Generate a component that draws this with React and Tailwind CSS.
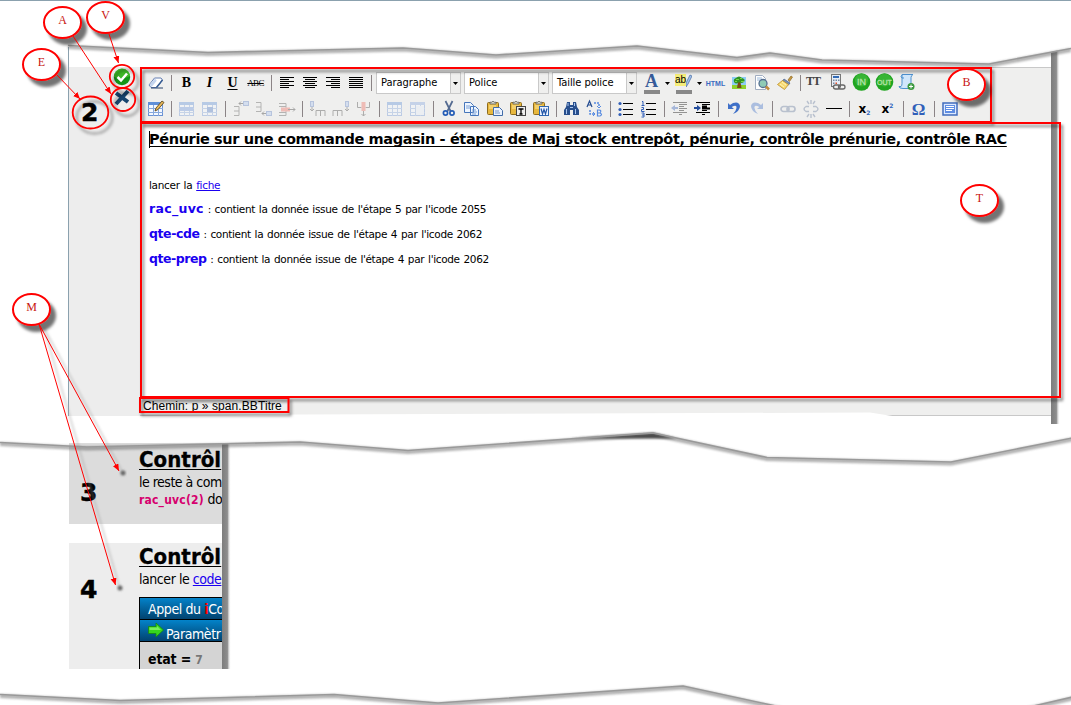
import React from "react";

const Box = ({ children, dim, className = "" }) => (
  <span className={`flex h-[22px] w-[23px] shrink-0 items-center justify-center ${className}`}>
    <svg width="20" height="20" viewBox="0 0 20 20" opacity={dim ? 0.38 : 1} fill="none">{children}</svg>
  </span>
);

const Sep = () => (
  <span className="flex h-[22px] w-[8px] shrink-0 items-center justify-center">
    <span className="h-[16px] w-px bg-[#8b8486]" />
  </span>
);

const Lines = ({ rows, color = "#000" }) => (
  <g fill={color} shapeRendering="crispEdges">
    {rows.map(([x, y, w], i) => <rect key={i} x={x} y={y} width={w} height="1" />)}
  </g>
);

const Glyph = ({ children, className }) => (
  <span className={`flex h-[22px] w-[23px] shrink-0 items-center justify-center leading-none text-black ${className}`}>{children}</span>
);

const Select = ({ label }) => (
  <span className="mr-[3px] flex h-[22px] w-[85px] shrink-0 border border-[#c9c9c9] bg-white">
    <span className="flex-1 pl-[4px] font-['DejaVu_Sans_Condensed','DejaVu_Sans',sans-serif] text-[11px] leading-[20px] tracking-[-0.05px] text-black">{label}</span>
    <span className="flex w-[10px] items-center justify-center border-l border-[#c9c9c9] bg-[#efefee]"><Caret /></span>
  </span>
);

const Caret = () => <svg width="5" height="3" viewBox="0 0 5 3"><path d="M0 0h5L2.5 3z" fill="#000" /></svg>;

const Table = ({ x = 2, y = 3, w = 15, h = 14, head = "#5f8fd8" }) => (
  <g>
    <rect x={x + 0.5} y={y + 0.5} width={w - 1} height={h - 1} fill="#f4f8ff" stroke="#6a92d4" />
    <rect x={x} y={y} width={w} height="3" fill={head} />
    <path d={`M${x} ${y + 6.5}h${w}M${x} ${y + 10.5}h${w}M${x + 5.5} ${y + 3}v${h - 3}M${x + 10.5} ${y + 3}v${h - 3}`} stroke="#86a8dd" />
  </g>
);

const Clipboard = ({ children }) => (
  <g>
    <rect x="2.5" y="3.5" width="11" height="12" rx="1" fill="#e8b83e" stroke="#8d6b1d" />
    <path d="M5 5V3.2h1.7Q8 1 9.3 3.2H11V5z" fill="#d6d6c6" stroke="#666" strokeWidth=".8" />
    <path d="M4 7h7M4 9h4" stroke="#ffe89a" />
    {children}
  </g>
);

const Toolbar = () => (
  <div className="flex h-[55px] flex-col border-t border-[#c8c8c8] bg-[#efefee] pt-[4px] pl-[4px]">
    <div className="flex h-[26px]">
      <Box><path d="M3 12 8.500 5h6.500l1.500 2-6 7.500H5z" fill="#fff" stroke="#657fb2" strokeLinejoin="round" /><path d="M3.500 11.800 9 5.500l1.800 2.300-5.300 6.200z" fill="#c3d4ee" /><path d="M5 15h12" stroke="#29446e" /><path d="m16.500 7-6 7.500" stroke="#355a91" strokeWidth="1.500" /></Box>
      <Sep />
      <Glyph className="font-['Liberation_Serif',serif] text-[14px] font-bold">B</Glyph>
      <Glyph className="font-['Liberation_Serif',serif] text-[14px] font-bold italic">I</Glyph>
      <Glyph className="font-['Liberation_Serif',serif] text-[14px] font-bold underline underline-offset-2">U</Glyph>
      <Glyph className="font-['Liberation_Serif',serif] text-[9px] tracking-[-0.7px] line-through">ABC</Glyph>
      <Sep />
      <Box><Lines rows={[[3,4,14],[3,6,9],[3,8,14],[3,10,9],[3,12,14],[3,14,9]]} /></Box>
      <Box><Lines rows={[[3,4,14],[5,6,10],[3,8,14],[5,10,10],[3,12,14],[5,14,10]]} /></Box>
      <Box><Lines rows={[[3,4,14],[8,6,9],[3,8,14],[8,10,9],[3,12,14],[8,14,9]]} /></Box>
      <Box><Lines rows={[[3,4,14],[3,6,14],[3,8,14],[3,10,14],[3,12,14],[3,14,14]]} /></Box>
      <Sep />
      <span className="ml-px flex">
        <Select label="Paragraphe" />
        <Select label="Police" />
        <Select label="Taille police" />
      </span>
      <span className="flex w-[32px]">
        <span className="flex w-[23px] flex-col items-center">
          <span className="font-['Liberation_Serif',serif] text-[18px] leading-[18px] font-bold text-[#365b99]">A</span>
          <span className="h-[4px] w-[16px] bg-[#888]" />
        </span>
        <span className="flex h-[22px] w-[9px] items-center justify-center"><Caret /></span>
      </span>
      <span className="flex w-[32px]">
        <span className="flex w-[23px] flex-col items-center">
          <span className="flex h-[18px] items-start pt-[2px]">
            <span className="h-[12px] bg-[#f6ed77] font-['Liberation_Sans',sans-serif] text-[10px] leading-[11px] text-black">ab</span>
            <svg width="6" height="14" viewBox="0 0 6 14"><path d="M0 13V9l4-8 2 1-4 8z" fill="#9fc1ef" stroke="#486a9e" strokeWidth=".7" /></svg>
          </span>
          <span className="h-[4px] w-[16px] bg-[#888]" />
        </span>
        <span className="flex h-[22px] w-[9px] items-center justify-center"><Caret /></span>
      </span>
      <Glyph className="font-['Liberation_Sans',sans-serif] text-[7px] font-bold"><span className="text-[#3a6bc0]">HTML</span></Glyph>
      <Box><rect x="3" y="4" width="14" height="12" fill="#8ecbf5" /><path d="M3 12h14v4H3z" fill="#8ed02c" /><path d="M9 9h2.500l1 6H8z" fill="#7a4b16" /><path d="M5 9q-1-3 2-4 3-3 6 0 4 1 2 4-3 2-5 0-3 3-5 0z" fill="#2f9422" /><path d="M7 6.500h3M11 5.500h2M12 8.500h3M6 8.500h2" stroke="#77d545" /></Box>
      <Box><path d="M3.500 2.500h7l3 3v11h-10z" fill="#fff" stroke="#a0adc0" /><path d="M5 5h5M5 7h5" stroke="#9bb9da" /><circle cx="11" cy="10.500" r="4" fill="#8fcbb5" stroke="#566f91" strokeWidth="1.300" /><path d="m14 13.500 3 3" stroke="#c18b39" strokeWidth="2.500" /></Box>
      <Box><path d="m13 7 3-4 1.500 1-3 4.500z" fill="#ca9a40" stroke="#8c6b28" strokeWidth=".7" /><path d="m9 6 6 4-1.500 2-6-4z" fill="#778fb6" stroke="#4b628c" strokeWidth=".7" /><path d="m7.500 7.500 6 4-4 5-7-5z" fill="#f8da73" stroke="#b98c26" strokeWidth=".8" /><path d="m5 11 4 3M7 9l4 3" stroke="#fff3b7" /></Box>
      <Sep />
      <Glyph className="pr-[5px] pb-[4px] font-['Liberation_Serif',serif] text-[12px] font-bold tracking-[-1px]"><span className="text-[#444]">TT</span></Glyph>
      <Box><rect x="2.500" y="1.500" width="9" height="12" fill="#e6edf7" stroke="#777" /><rect x="4" y="3" width="6" height="2" fill="#336bb6" /><g fill="#798aa0"><path d="M4 6.500h1.500V8H4zM6.500 6.500H8V8H6.500zM9 6.500h1.500V8H9zM4 9.500h1.500V11H4z" /><path d="M6.500 9.500H8V11H6.500z" fill="#e5532e" /></g><rect x="4.500" y="12" width="6.500" height="4" rx="2" stroke="#666" strokeWidth="1.300" fill="#eee" /><rect x="9.500" y="12" width="6.500" height="4" rx="2" stroke="#666" strokeWidth="1.300" /></Box>
      {["IN", "OUT"].map((t) => (
        <Glyph key={t}><svg width="20" height="20" viewBox="0 0 20 20"><circle cx="9.500" cy="9" r="8.800" fill="#20a520" /><circle cx="9.500" cy="7" r="6.500" fill="#48bf43" opacity=".6" /><text x="9.500" y={t === "IN" ? 12 : 11.5} textAnchor="middle" fontFamily="Liberation Sans" fontSize={t === "IN" ? 9 : 7} fill="#b5e3a8" stroke="#b5e3a8" strokeWidth=".3">{t}</text></svg></Glyph>
      ))}
      <Box><path d="M4 1.500h11q-2 1-2 3v11H5q-4 0-4-2h2q1-1 1-3z" fill="#cfe6fb" stroke="#4c91cf" /><path d="M4 2q-2 2 0 3h2" stroke="#4c91cf" /><circle cx="13" cy="13.500" r="3.500" fill="#3b993f" /><path d="M11 13.500h4M13 11.500v4" stroke="#fff" /></Box>
    </div>
    <div className="flex h-[22px]">
      <Box><Table /><path d="m9 12 1-3 6-7 2 1.500-6 7z" fill="#e9b959" stroke="#5d4a20" strokeWidth=".9" /></Box>
      <Sep />
      <Box dim><Table /><rect x="3" y="8" width="13" height="4" fill="#6b95dd" /></Box>
      <Box dim><Table /><rect x="7" y="8" width="6" height="5" fill="#4b78c5" /></Box>
      <Sep />
      <Box dim><path d="M3 7.500h5v9H3M3 12h5" stroke="#555" /><path d="M8 4.500h4M10 2.500l-2 2 2 2" stroke="#333" /><rect x="12.500" y="2.500" width="5" height="4" fill="#a9c3ef" stroke="#5f7fc4" /></Box>
      <Box dim><path d="M2 3.500h5v9H2M2 8h5" stroke="#555" /><path d="M8 14.500h4M10 12.500l-2 2 2 2" stroke="#333" /><rect x="12.500" y="12.500" width="5" height="4" fill="#a9c3ef" stroke="#5f7fc4" /></Box>
      <Box dim><path d="M2 4.500h7v12H2M2 7.500h7M2 13.500h7" stroke="#555" /><rect x="4" y="8.500" width="9" height="4" fill="#ed6a5e" /><path d="M11 10.500h7m-2-2 2 2-2 2" stroke="#333" /></Box>
      <Sep />
      <Box dim><rect x="2.500" y="2.500" width="3" height="5" fill="#a9c3ef" stroke="#5f7fc4" /><path d="M4 8v4m-2-2 2 2 2-2M8 17v-5.500h9V17M12.500 12v5" stroke="#444" /></Box>
      <Box dim><rect x="14.500" y="2.500" width="3" height="5" fill="#a9c3ef" stroke="#5f7fc4" /><path d="M16 8v4m-2-2 2 2 2-2M2 17v-5.500h9V17M6.500 12v5" stroke="#444" /></Box>
      <Box dim><path d="M3.500 3v5.500h4M15.500 3v5.500h-4M9.500 11v6m-2-2 2 2 2-2" stroke="#444" /><rect x="7.500" y="3" width="4" height="9" fill="#ed6a5e" /></Box>
      <Sep />
      <Box dim><Table /></Box>
      <Box dim><Table head="#82a5df" /><rect x="8" y="7" width="8" height="9" fill="#e5edfb" /></Box>
      <Sep />
      <Box><path d="m6.500 2 5 10M13.500 2l-5 10" stroke="#536a91" strokeWidth="1.700" /><circle cx="6.500" cy="14" r="2.100" stroke="#245cb6" strokeWidth="1.700" /><circle cx="13" cy="14" r="2.100" stroke="#245cb6" strokeWidth="1.700" /></Box>
      <Box><path d="M2.500 3.500h6l3 3v7h-9zM8.500 7.500h5l3 3v6h-8z" fill="#edf5ff" stroke="#4575bb" /><path d="M4 7h4M4 9h4M10 11h4M10 13h5M10 15h4" stroke="#7b9fd4" /></Box>
      <Box><Clipboard><path d="M8.500 8.500h6l3 3v5h-9z" fill="#eaf2ff" stroke="#416ca9" /><path d="M10 12h4M10 14h5" stroke="#7897c7" /></Clipboard></Box>
      <Box><Clipboard><rect x="8.500" y="7.500" width="9" height="9" fill="#eee" stroke="#444" /><path d="M10.500 10h5M13 10v5M11.500 15h3" stroke="#000" strokeWidth="1.300" /></Clipboard></Box>
      <Box><Clipboard><rect x="8.500" y="7.500" width="9" height="9" fill="#edf4ff" stroke="#3168b2" /><path d="m10 9.500 1.500 5.500L13 10.500l1.500 4.500L16 9.500" stroke="#2256a8" strokeWidth="1.200" /></Clipboard></Box>
      <Sep />
      <Box><path d="M5 3h3v3h3V3h3l1 5 2 3v5h-6v-5H8v5H2v-5l2-3z" fill="#284f8d" /><path d="M4.500 10v5M13.500 10v5M6 4v3M12.500 4v3M8 8.500h3" stroke="#a9c6ef" /></Box>
      <Box><path d="M2 8 4.500 2 7 8M3 6h3" stroke="#244c91" strokeWidth="1.200" /><path d="M12.500 11v6h2.500q3-1.500 0-3 2-3-1-3zm0 3h3" stroke="#578be0" strokeWidth="1.200" /><path d="M9 4h5v4M5 11v4h5" stroke="#578be0" strokeWidth="1.500" strokeDasharray="2 1" /><path d="m12 7 2 2 2-2M8 13l2 2-2 2" stroke="#578be0" /></Box>
      <Sep />
      <Box><Lines rows={[[7,4,10],[7,10,10],[7,15,10]]} /><g fill="#315eb8"><circle cx="4" cy="4.500" r="1.600" /><circle cx="4" cy="10.500" r="1.600" /><circle cx="4" cy="15.500" r="1.600" /></g></Box>
      <Box><Lines rows={[[7,4,10],[7,10,10],[7,15,10]]} /><path d="M3 2.500h1v4M2.500 6.500h3M2.500 8.500h2v2h-2v2h3M2.500 14h2.500v4H2.500M3 16h2" stroke="#315eb8" /></Box>
      <Sep />
      <Box dim><Lines rows={[[3,3,14],[9,5,8],[9,7,5],[9,9,8],[9,11,5],[3,13,14],[9,15,3]]} /><path d="m1 9 4-3v2h3v2H5v2z" fill="#315eb8" /></Box>
      <Box><Lines rows={[[3,3,14],[9,5,8],[9,7,5],[9,9,8],[9,11,5],[3,13,14],[9,15,3]]} /><path d="M9 7.500h5M9 9.500h8" stroke="#000" strokeWidth="2" /><path d="M8 9 4 6v2H1v2h3v2z" fill="#234d9c" /></Box>
      <Sep />
      <Box><path d="M4 4v6h6L7.700 8Q13 5 12.500 9q-.4 3-3.500 6 7-3 7-8-1-5-7-3L6 6z" fill="#3f70c8" /></Box>
      <Box dim><path d="M16 4v6h-6l2.300-2Q7 5 7.500 9q.4 3 3.500 6-7-3-7-8 1-5 7-3l3 2z" fill="#3f70c8" /></Box>
      <Sep />
      <Box dim><rect x="3" y="7.500" width="8" height="5" rx="2.500" stroke="#62779b" strokeWidth="1.700" /><rect x="9" y="7.500" width="8" height="5" rx="2.500" stroke="#62779b" strokeWidth="1.700" /></Box>
      <Box dim><path d="M8 7.500H5q-4 2.500 0 5h3M12 7.500h3q4 2.500 0 5h-3M10 1v4M10 15v4M6 2l2 3M14 2l-2 3M6 18l2-3M14 18l-2-3" stroke="#62779b" strokeWidth="1.400" /></Box>
      <Box><Lines rows={[[2,9,16]]} /></Box>
      <Sep />
      <Glyph className="font-['DejaVu_Sans',sans-serif] text-[12px] font-bold"><span>x</span><span className="pt-[7px] text-[6px] text-[#3165bd]">2</span></Glyph>
      <Glyph className="font-['DejaVu_Sans',sans-serif] text-[12px] font-bold"><span>x</span><span className="pb-[6px] text-[6px] text-[#3165bd]">2</span></Glyph>
      <Sep />
      <Glyph className="font-['Liberation_Serif',serif] text-[17px] font-bold"><span className="text-[#315fb9]">Ω</span></Glyph>
      <Sep />
      <Box><rect x="3" y="4" width="14" height="12" fill="#dce9ff" stroke="#426dbd" strokeWidth="1.500" /><rect x="5" y="6" width="10" height="8" fill="#5f8ee3" /><Lines color="#fff" rows={[[6,7,8],[6,9,8],[6,11,6]]} /></Box>
    </div>
  </div>
);

const Entry = ({ name, nameClass, children }) => (
  <p className="h-[25px] whitespace-nowrap text-[10.5px] leading-[25px] tracking-[-0.34px] [word-spacing:0.8px]">
    <b className={`text-[12.5px] ${nameClass} text-[#1a00f0]`}>{name}</b>{children}
  </p>
);

const StepNumber = ({ children, className }) => (
  <span className={`block font-['DejaVu_Sans',sans-serif] text-[25px] leading-[25px] font-bold tracking-normal text-black [-webkit-text-stroke:0.5px_black] ${className}`}>{children}</span>
);

const Editor = () => (
  <section className="flex h-[369px] w-[983px] border-l border-[#8ba1ae]">
    <aside className="mt-[20px] flex w-[71px] shrink-0 flex-col bg-[#ededed]">
      <StepNumber className="pt-[33px] pl-[12px]">2</StepNumber>
    </aside>
    <div className="mt-[20px] flex flex-1 flex-col">
      <Toolbar />
      <div className="flex h-[275px] flex-col bg-white pt-[7px] pl-[9px] font-['DejaVu_Sans',sans-serif] text-black">
        <h1 className="h-[20px] text-[14.5px] leading-[20px] font-bold tracking-[-0.375px] whitespace-nowrap underline decoration-1 underline-offset-2 [text-decoration-skip-ink:none]"><span className="-mr-px inline-block h-[17px] w-px bg-black align-[-4px]" />Pénurie sur une commande magasin - étapes de Maj stock entrepôt, pénurie, contrôle prénurie, contrôle RAC</h1>
        <p className="mt-[24px] h-[25px] text-[10.5px] leading-[25px] tracking-[-0.3px] whitespace-nowrap [word-spacing:0.8px]">lancer la <span className="text-[#1a00f0] underline">fiche</span></p>
        <div className="-mt-[2px]">
          <Entry name="rac_uvc" nameClass="tracking-[0.3px]"> : contient la donnée issue de l'étape 5 par l'icode 2055</Entry>
          <Entry name="qte-cde" nameClass="tracking-[-0.4px]"> : contient la donnée issue de l'étape 4 par l'icode 2062</Entry>
          <Entry name="qte-prep" nameClass="tracking-[-0.45px]"> : contient la donnée issue de l'étape 4 par l'icode 2062</Entry>
        </div>
      </div>
      <div className="flex-1 border-b border-[#c8c8c8] bg-[#efefee] pl-[3px] font-['Liberation_Sans',sans-serif] text-[12px] leading-[18px] tracking-[0.08px] text-black">Chemin: p » span.BBTitre</div>
    </div>
  </section>
);

const StepTitle = ({ children, className }) => (
  <h2 className={`h-[26px] text-[22px] leading-[26px] font-bold tracking-[0.05px] underline decoration-1 underline-offset-2 [-webkit-text-stroke:0.3px_black] ${className}`}>{children}</h2>
);

const Steps = () => (
  <section className="ml-[69px] flex h-[226px] w-[153px] flex-col overflow-hidden font-['DejaVu_Sans_Condensed','DejaVu_Sans',sans-serif] text-[14px] tracking-[-0.4px] whitespace-nowrap text-black">
    <div className="flex h-[81px] bg-[#dcdcdc]">
      <div className="w-[70px] shrink-0"><StepNumber className="pt-[37px] pl-[11px]">3</StepNumber></div>
      <div className="w-[83px] shrink-0">
        <StepTitle className="mt-[4px]">Contrôl</StepTitle>
        <p className="h-[17px] leading-[18px] tracking-[-0.5px]">le reste à com</p>
        <p className="h-[17px] leading-[18px]"><b className="text-[12px] tracking-[0.2px] text-[#d6006e]">rac_uvc(2)</b> do</p>
      </div>
    </div>
    <div className="mt-[19px] flex h-[126px] bg-[#ededed]">
      <div className="w-[70px] shrink-0"><StepNumber className="pt-[34px] pl-[11px]">4</StepNumber></div>
      <div className="w-[83px] shrink-0">
        <StepTitle className="mt-px">Contrôl</StepTitle>
        <p className="h-[17px] leading-[18px] tracking-[-0.45px]">lancer le <span className="text-[#1a00f0] underline">code</span></p>
        <div className="mt-[10px] border border-r-0 border-black bg-[#d4d4d4] text-white">
          <div className="h-[22px] border-b border-black bg-linear-to-b from-[#0383ca] to-[#024370] pl-[8px] leading-[22px] tracking-[-0.4px]">Appel du <b className="text-[#ff0000]">i</b>Co</div>
          <div className="flex h-[22px] border-b border-black bg-linear-to-b from-[#0383ca] to-[#024370] pl-[8px] leading-[28px]">
            <svg className="mt-[2px] mr-[2px] shrink-0" width="16" height="16" viewBox="0 0 16 16"><path d="M.5 4.500h7.500V1l7.500 7-7.500 7v-3.500H.5z" fill="#36d51e" stroke="#16870e" strokeWidth=".8" /><path d="M1.500 5.500H9V4l4 4H1.500z" fill="#79ef5d" /></svg>Paramètr
          </div>
          <div className="h-[30px] pl-[8px] leading-[34px] font-bold tracking-[-0.15px] text-black">etat = <span className="text-[12px] text-[#777]">7</span></div>
        </div>
      </div>
    </div>
  </section>
);

const TOP = "M68 45.500 208 52.500 403 48 496 55 637 46 737 57.500 770 53 822 60 989 64 1071 48.500";
const MID = "M0 442.500 87 447 300 442 408 450.500 653 433 767 457.500 951 462 1075 437.500";
const LOW = "M0 694.500 120 700.500 334 694.500 438 703 683 686 785 708";
const LOW_END = "M1025 708 1075 696.500";

const Tear = ({ d }) => (
  <g fill="none" strokeLinejoin="round">
    <path d={d} stroke="#555" strokeWidth="4" opacity=".45" filter="url(#soft)" transform="translate(0 1.500)" />
    <path d={d} stroke="#999" strokeWidth="1.600" />
  </g>
);

const CALLOUTS = [["A", 62.5, 22.5], ["V", 105.5, 17.5], ["E", 41.5, 64.5], ["M", 31.5, 309.5], ["B", 966.5, 84.5], ["T", 979.5, 200.5]];
const ARROWS = [[73, 36, 111, 94], [109, 34, 118.5, 63], [57, 75, 80, 99], [39, 324, 119, 471], [39, 324, 115.5, 585]];

const Annotations = () => (
  <svg className="pointer-events-none absolute inset-0" width="1071" height="705" viewBox="0 0 1071 705">
    <defs>
      <filter id="soft" x="-10%" y="-50%" width="120%" height="200%"><feGaussianBlur stdDeviation="1.2" /></filter>
      <filter id="drop" filterUnits="userSpaceOnUse" x="0" y="0" width="1071" height="705"><feDropShadow dx="2" dy="3" stdDeviation="1.5" floodColor="#000" floodOpacity=".5" /></filter>
      <filter id="ring" filterUnits="userSpaceOnUse" x="0" y="0" width="1071" height="705"><feDropShadow dx="4" dy="5" stdDeviation="1.5" floodColor="#000" floodOpacity=".4" /></filter>
      <filter id="deep" filterUnits="userSpaceOnUse" x="0" y="0" width="1071" height="705"><feDropShadow dx="5" dy="6" stdDeviation="1.8" floodColor="#000" floodOpacity=".55" /></filter>
      <linearGradient id="edge"><stop offset="0" stopColor="#7d7d7d" /><stop offset=".6" stopColor="#8d8d8d" /><stop offset="1" stopColor="#fff" stopOpacity="0" /></linearGradient>
      <marker id="tip" markerUnits="userSpaceOnUse" markerWidth="8" markerHeight="8" refX="7" refY="3" orient="auto"><path d="M0 0 7 3 0 6z" fill="#f00" /></marker>
    </defs>
    <path d="M140 416 300 414.500 870 412.500 905 418H140z" fill="#fff" />
    <path d="M1051 52 1060 50V424H1051z" fill="url(#edge)" />
    <path d="M222 444H231V669H222z" fill="url(#edge)" />
    <path d="M570 438.500 653 433 676 438.500z" fill="#444" filter="url(#soft)" />
    <Tear d={TOP} /><Tear d={MID} /><Tear d={LOW} /><Tear d={LOW_END} />
    <circle cx="122" cy="77" r="8.200" fill="#139417" /><path d="M114 77a8 8 0 0 1 16-1q-7 4-16 1z" fill="#50c72e" opacity=".7" /><path d="m117.500 77 3.500 3.500 6-7" fill="none" stroke="#fff" strokeWidth="2.500" />
    <path d="m116 93 12 9M128 91l-12 13" stroke="#17456f" strokeWidth="4" />
    <g fill="none" stroke="#f00" strokeWidth="2" filter="url(#drop)">
      <rect x="141" y="68" width="850" height="54" />
      <rect x="141" y="123" width="919" height="274" />
      <rect x="140" y="398" width="148.500" height="14" />
    </g>
    <g fill="none" stroke="#f00" strokeWidth="1.800" filter="url(#ring)">
      <ellipse cx="122" cy="76.500" rx="12.200" ry="11.600" /><ellipse cx="123" cy="99.500" rx="12.200" ry="11.500" /><ellipse cx="90.500" cy="112.500" rx="17.800" ry="16" />
    </g>
    <g stroke="#999" strokeWidth="2.500" opacity=".3" filter="url(#soft)"><path d="M44 328 123 473M44 328 119.500 587" /></g>
    <g fill="#666" filter="url(#soft)"><circle cx="123" cy="473" r="2.500" /><circle cx="120" cy="588" r="2.500" /></g>
    <g fill="#fff" stroke="#f00" strokeWidth="2" filter="url(#deep)">{CALLOUTS.map(([t, x, y]) => <ellipse key={t} cx={x} cy={y} rx="18.500" ry="15.500" />)}</g>
    <g stroke="#f00" strokeWidth="1">{ARROWS.map(([a, b, c, e], i) => <line key={i} x1={a} y1={b} x2={c} y2={e} markerEnd="url(#tip)" />)}</g>
    <g fill="#c81410" fontFamily="Liberation Serif" fontSize="12" textAnchor="middle">{CALLOUTS.map(([t, x, y]) => <text key={t} x={x} y={y + 1.5}>{t}</text>)}</g>
  </svg>
);

export default function App() {
  return (
    <main className="relative flex h-[705px] w-[1071px] flex-col overflow-hidden border-t border-[#8ba1ae] bg-white">
      <div className="mt-[46px] ml-[68px]"><Editor /></div>
      <div className="mt-[27px]"><Steps /></div>
      <div className="absolute -top-px left-0"><Annotations /></div>
    </main>
  );
}
